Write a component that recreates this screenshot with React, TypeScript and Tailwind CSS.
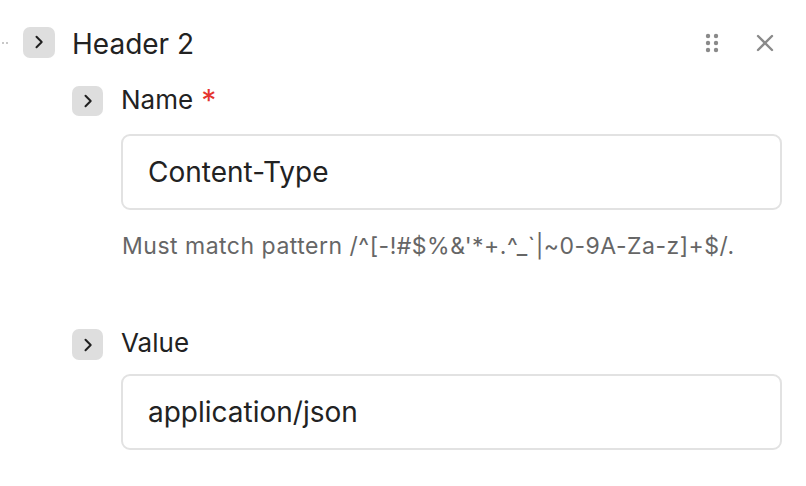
import React from "react";

function ChevronButton({ className }: { className: string }) {
  return (
    <div className={`flex items-center justify-center rounded-[7px] bg-[#dedede] ${className}`}>
      <svg width="14" height="14" viewBox="0 0 14 14" fill="none">
        <path d="M4.5 1.8 L9.7 7 L4.5 12.2" stroke="#1f1f1f" strokeWidth="2" strokeLinecap="round" strokeLinejoin="round" />
      </svg>
    </div>
  );
}

function DragHandle() {
  return (
    <svg width="14" height="20" viewBox="0 0 14 20" fill="#8a8a8a">
      <circle cx="3" cy="3" r="2.2" />
      <circle cx="11" cy="3" r="2.2" />
      <circle cx="3" cy="10" r="2.2" />
      <circle cx="11" cy="10" r="2.2" />
      <circle cx="3" cy="17" r="2.2" />
      <circle cx="11" cy="17" r="2.2" />
    </svg>
  );
}

function CloseIcon() {
  return (
    <svg width="18" height="18" viewBox="0 0 18 18" fill="none">
      <path d="M2 2 L16 16 M16 2 L2 16" stroke="#8a8a8a" strokeWidth="2.4" strokeLinecap="round" />
    </svg>
  );
}

function TextBox({ value }: { value: string }) {
  return (
    <div className="ml-[121px] mr-[24px] flex h-[76px] items-center rounded-[9px] border-2 border-[#e2e2e2] pl-[25px] text-[28px] text-[#222]">
      {value}
    </div>
  );
}

export default function App() {
  return (
    <div className="h-[486px] w-[806px] overflow-hidden bg-white text-[#222]" style={{ fontFamily: "Inter, 'Noto Sans', sans-serif" }}>
      {/* Header row */}
      <div className="flex items-center pt-[26px]">
        <div className="flex w-[23px] items-center gap-[2px] pl-[2px] pt-[1px]">
          <span className="h-[2px] w-[2px] bg-[#c8c8c8]" />
          <span className="h-[2px] w-[2px] bg-[#c8c8c8]" />
        </div>
        <ChevronButton className="h-[31px] w-[32px]" />
        <span className="ml-[17px] mt-[4px] text-[28px] leading-none">Header 2</span>
        <div className="ml-auto mr-[32px] flex items-center gap-[37px] pt-[2px]">
          <DragHandle />
          <CloseIcon />
        </div>
      </div>

      {/* Name field */}
      <div className="mt-[28px] flex items-center pl-[72px]">
        <ChevronButton className="h-[30px] w-[31px]" />
        <span className="-mt-[3px] ml-[18px] text-[26px] leading-none">Name</span>
        <span className="-mt-[3px] ml-[8px] text-[30px] leading-none text-[#e5352f]">*</span>
      </div>
      <div className="mt-[18px]">
        <TextBox value="Content-Type" />
      </div>
      <div className="ml-[122px] mt-[20px] text-[23px] leading-[32px] tracking-[0.5px] text-[#666]">
        Must match pattern /^[-!#$%&'*+.^_`|~0-9A-Za-z]+$/.
      </div>

      {/* Value field */}
      <div className="mt-[67px] flex items-center pl-[72px]">
        <ChevronButton className="h-[31px] w-[31px]" />
        <span className="-mt-[3px] ml-[18px] text-[26px] leading-none">Value</span>
      </div>
      <div className="mt-[14px]">
        <TextBox value="application/json" />
      </div>
    </div>
  );
}
